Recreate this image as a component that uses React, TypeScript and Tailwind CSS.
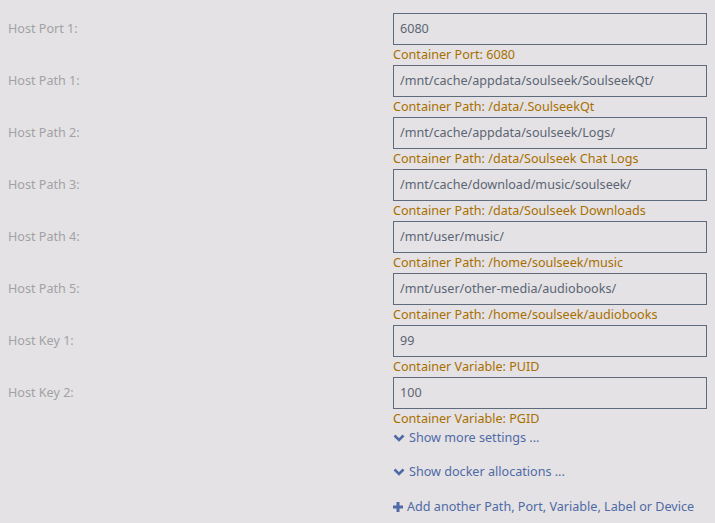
const rows = [
  { label: "Host Port 1:", value: "6080", note: "Container Port: 6080" },
  { label: "Host Path 1:", value: "/mnt/cache/appdata/soulseek/SoulseekQt/", note: "Container Path: /data/.SoulseekQt" },
  { label: "Host Path 2:", value: "/mnt/cache/appdata/soulseek/Logs/", note: "Container Path: /data/Soulseek Chat Logs" },
  { label: "Host Path 3:", value: "/mnt/cache/download/music/soulseek/", note: "Container Path: /data/Soulseek Downloads" },
  { label: "Host Path 4:", value: "/mnt/user/music/", note: "Container Path: /home/soulseek/music" },
  { label: "Host Path 5:", value: "/mnt/user/other-media/audiobooks/", note: "Container Path: /home/soulseek/audiobooks" },
  { label: "Host Key 1:", value: "99", note: "Container Variable: PUID" },
  { label: "Host Key 2:", value: "100", note: "Container Variable: PGID" },
];

function Chevron() {
  return (
    <svg width="12" height="8" viewBox="0 0 12 8" className="shrink-0">
      <path d="M1.5 1.5 L6 6 L10.5 1.5" fill="none" stroke="currentColor" strokeWidth="2.6" />
    </svg>
  );
}

function Plus() {
  return (
    <svg width="10" height="10" viewBox="0 0 10 10" className="shrink-0">
      <rect x="3.5" y="0" width="3" height="10" fill="currentColor" />
      <rect x="0" y="3.5" width="10" height="3" fill="currentColor" />
    </svg>
  );
}

export default function App() {
  return (
    <div
      className="w-[715px] h-[523px] overflow-hidden bg-[#e4e2e4] pt-[13px] text-[12.6px]"
      style={{ fontFamily: '"Noto Sans", sans-serif' }}
    >
      {rows.map((row) => (
        <div key={row.label} className="flex">
          <div className="w-[393px] pl-2 h-8 flex items-center text-[#a2a2a4]">{row.label}</div>
          <div className="w-[314px]">
            <div className="h-8 border border-[#5e6b7d] flex items-center px-[6px] text-[#5b6575]">
              {row.value}
            </div>
            <div className="h-5 leading-[19px] text-[#a86f00]">{row.note}</div>
          </div>
        </div>
      ))}
      <div className="pl-[393px] flex flex-col text-[#4f6aa6]">
        <div className="flex items-center gap-1 h-[18px]">
          <Chevron />
          <span>Show more settings ...</span>
        </div>
        <div className="flex items-center gap-1 h-[18px] mt-4">
          <Chevron />
          <span>Show docker allocations ...</span>
        </div>
        <div className="flex items-center gap-1 h-[18px] mt-[17px]">
          <Plus />
          <span>Add another Path, Port, Variable, Label or Device</span>
        </div>
      </div>
    </div>
  );
}
